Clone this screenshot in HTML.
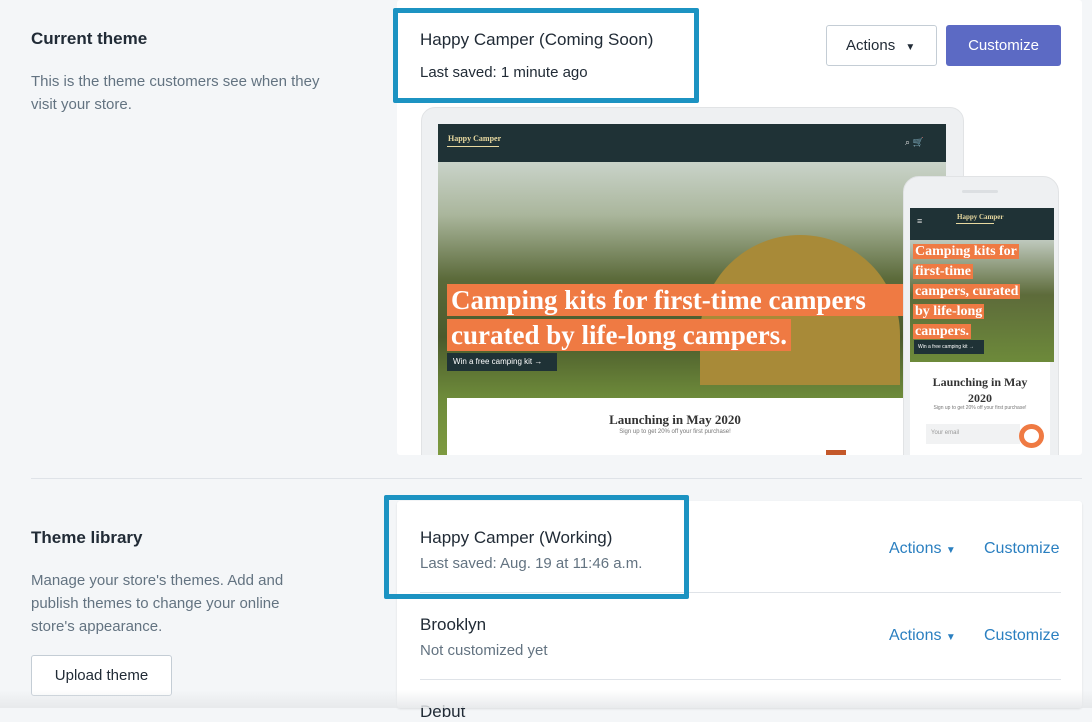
<!DOCTYPE html>
<html><head><style>
*{margin:0;padding:0;box-sizing:border-box}
body{width:1092px;height:708px;overflow:hidden;background:#f4f6f8;font-family:"Liberation Sans",sans-serif;position:relative;color:#212b36}
.a{position:absolute}
.h{font-size:17px;color:#212b36}
.s{font-size:15px;color:#637381;line-height:23px}
.blue{color:#2a7fc0;font-size:16px}
.ser{font-family:"Liberation Serif",serif}
.hl{background:#ef7a43;color:#fff;padding:0 4px}
.clip{position:absolute;left:397px;top:0;width:685px;height:455px;overflow:hidden;background:#fff;border-radius:3px}
.clip .a{position:absolute}
</style></head><body>
<div class="a h" style="left:31px;top:29px;font-weight:bold;font-size:17px">Current theme</div>
<div class="a s" style="left:31px;top:70px;width:318px">This is the theme customers see when they visit your store.</div>

<div class="clip">
<div class="a" style="left:24px;top:107px;width:543px;height:380px;background:#eef0f2;border-radius:14px;border:1px solid #e1e3e5"></div>
<div class="a" style="left:41px;top:124px;width:508px;height:38px;background:#1f3236"></div>
<div class="a ser" style="left:51px;top:134px;font-size:8px;color:#e8d9a0;font-weight:bold">Happy Camper</div>
<div class="a" style="left:50px;top:146px;width:52px;height:1px;background:#e8d9a0"></div>
<div class="a" style="left:508px;top:137px;font-size:9px;color:#ddd">⌕ 🛒</div>
<div class="a" style="left:41px;top:162px;width:508px;height:293px;background:linear-gradient(180deg,#c9d3c9 0%,#aab69c 18%,#5b6a3a 40%,#4b5a2c 60%,#6d8a3a 80%,#7d9a40 100%)"></div>
<div class="a" style="left:303px;top:235px;width:200px;height:150px;border-radius:100px 100px 0 0;background:#a88a38"></div>
<div class="a ser hl" style="left:50px;top:284px;font-size:27px;font-weight:bold;line-height:32px;white-space:nowrap;width:456px;overflow:hidden">Camping kits for first-time campers</div>
<div class="a ser hl" style="left:50px;top:319px;font-size:27px;font-weight:bold;line-height:32px;white-space:nowrap">curated by life-long campers.</div>
<div class="a" style="left:50px;top:353px;width:110px;height:18px;background:#1f3236;color:#fff;font-size:8px;padding:4px 6px;white-space:nowrap">Win a free camping kit →</div>
<div class="a" style="left:50px;top:398px;width:456px;height:57px;background:#fff"></div>
<div class="a ser" style="left:50px;top:412px;width:456px;text-align:center;font-size:13px;font-weight:bold;color:#333">Launching in May 2020</div>
<div class="a" style="left:50px;top:429px;width:456px;text-align:center;font-size:6px;color:#777">Sign up to get 20% off your first purchase!</div>
<div class="a" style="left:429px;top:450px;width:20px;height:5px;background:#c4582a"></div>

<div class="a" style="left:506px;top:176px;width:156px;height:310px;background:#eef0f2;border-radius:16px;border:1px solid #e1e3e5"></div>
<div class="a" style="left:565px;top:190px;width:36px;height:3px;background:#dcdfe2;border-radius:2px"></div>
<div class="a" style="left:513px;top:208px;width:144px;height:32px;background:#1f3236"></div>
<div class="a" style="left:520px;top:216px;font-size:9px;color:#ddd">≡</div>
<div class="a ser" style="left:560px;top:213px;font-size:7px;color:#e8d9a0;font-weight:bold">Happy Camper</div>
<div class="a" style="left:559px;top:223px;width:38px;height:1px;background:#e8d9a0"></div>
<div class="a" style="left:513px;top:240px;width:144px;height:122px;background:linear-gradient(180deg,#bfc9bd,#5d6b3a 45%,#6d8a3a)"></div>
<div class="a ser" style="left:516px;top:242px;font-size:14px;font-weight:bold;line-height:20px;color:#fff;width:140px;white-space:nowrap"><span class="hl" style="padding:0 2px">Camping kits for</span><br><span class="hl" style="padding:0 2px">first-time</span><br><span class="hl" style="padding:0 2px">campers, curated</span><br><span class="hl" style="padding:0 2px">by life-long</span><br><span class="hl" style="padding:0 2px">campers.</span></div>
<div class="a" style="left:517px;top:340px;width:70px;height:14px;background:#1f3236;color:#fff;font-size:5px;padding:4px 4px;white-space:nowrap">Win a free camping kit →</div>
<div class="a" style="left:513px;top:362px;width:140px;height:93px;background:#fff"></div>
<div class="a ser" style="left:513px;top:374px;width:140px;text-align:center;font-size:12px;font-weight:bold;line-height:16px;color:#333">Launching in May<br>2020</div>
<div class="a" style="left:513px;top:405px;width:140px;text-align:center;font-size:5px;color:#777">Sign up to get 20% off your first purchase!</div>
<div class="a" style="left:529px;top:424px;width:94px;height:20px;background:#f1f2f3;font-size:6px;color:#999;padding:6px 5px">Your email</div>
<div class="a" style="left:622px;top:424px;width:25px;height:24px;border:5px solid #ef7a43;border-radius:50%"></div>
</div>

<div class="a" style="left:826px;top:25px;width:111px;height:41px;border:1px solid #c4cdd5;border-radius:3px;background:#fff;font-size:15px;padding:11px 0 0 19px;color:#212b36">Actions <span style="font-size:10px;margin-left:6px">▼</span></div>
<div class="a" style="left:946px;top:25px;width:115px;height:41px;background:#5c6ac4;border-radius:3px;color:#fff;font-size:15px;text-align:center;line-height:41px">Customize</div>

<div class="a" style="left:393px;top:8px;width:306px;height:95px;border:5px solid #1c93c2;border-radius:2px"></div>
<div class="a h" style="left:420px;top:30px">Happy Camper (Coming Soon)</div>
<div class="a" style="left:420px;top:64px;font-size:15px;color:#212b36">Last saved: 1 minute ago</div>

<div class="a" style="left:31px;top:478px;width:1051px;height:1px;background:#dfe3e8"></div>

<div class="a h" style="left:31px;top:528px;font-weight:bold">Theme library</div>
<div class="a s" style="left:31px;top:569px;width:285px">Manage your store's themes. Add and publish themes to change your online store's appearance.</div>
<div class="a" style="left:31px;top:655px;width:141px;height:41px;border:1px solid #c4cdd5;border-radius:3px;background:#fff;font-size:15px;text-align:center;line-height:39px">Upload theme</div>

<div class="a" style="left:397px;top:501px;width:685px;height:207px;background:#fff;border-radius:3px;box-shadow:0 1px 2px rgba(0,0,0,.1)"></div>
<div class="a" style="left:420px;top:592px;width:641px;height:1px;background:#dfe3e8"></div>
<div class="a" style="left:420px;top:679px;width:641px;height:1px;background:#dfe3e8"></div>
<div class="a" style="left:384px;top:495px;width:305px;height:104px;border:5px solid #1c93c2;border-radius:2px"></div>
<div class="a h" style="left:420px;top:528px">Happy Camper (Working)</div>
<div class="a s" style="left:420px;top:552px">Last saved: Aug. 19 at 11:46 a.m.</div>
<div class="a blue" style="left:889px;top:540px">Actions <span style="font-size:10px">▼</span></div>
<div class="a blue" style="left:984px;top:540px">Customize</div>
<div class="a h" style="left:420px;top:615px">Brooklyn</div>
<div class="a s" style="left:420px;top:639px">Not customized yet</div>
<div class="a blue" style="left:889px;top:627px">Actions <span style="font-size:10px">▼</span></div>
<div class="a blue" style="left:984px;top:627px">Customize</div>
<div class="a h" style="left:420px;top:702px">Debut</div>
<div class="a" style="left:0;top:690px;width:1092px;height:18px;background:linear-gradient(rgba(244,246,248,0),rgba(230,232,234,.9))"></div>
</body></html>
